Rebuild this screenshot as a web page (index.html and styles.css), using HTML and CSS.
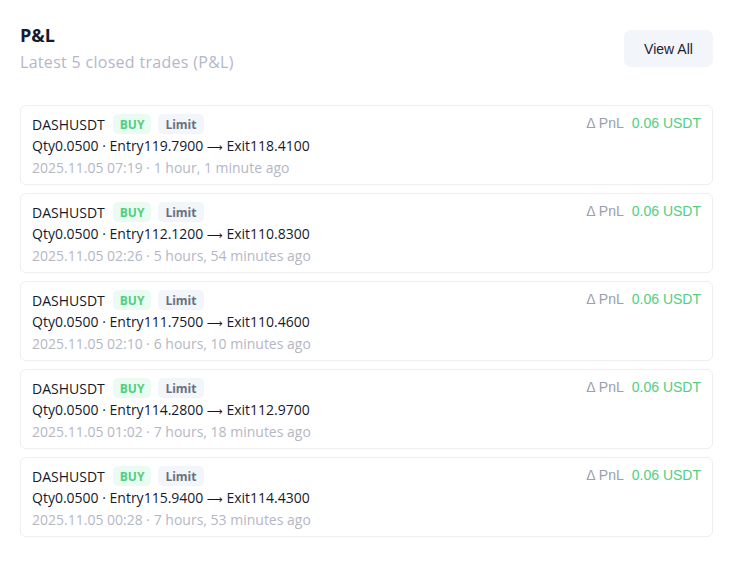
FILE: index.html
```html
<!DOCTYPE html>
<html>
<head>
<meta charset="utf-8">
<link rel="stylesheet" href="styles.css">
</head>
<body>
<div class="panel">
  <div class="header">
    <div>
      <h2 class="title">P&amp;L</h2>
      <div class="subtitle">Latest 5 closed trades (P&amp;L)</div>
    </div>
    <button class="btn">View All</button>
  </div>
  <div class="list">
    <div class="card">
      <div class="left">
        <div class="row1"><span class="sym">DASHUSDT</span><span class="badge buy">BUY</span><span class="badge lim">Limit</span></div>
        <div class="row2">Qty0.0500 · Entry119.7900 <span class="arr">⟶</span> Exit118.4100</div>
        <div class="row3">2025.11.05 07:19 · 1 hour, 1 minute ago</div>
      </div>
      <div class="pnl"><span class="lbl">Δ PnL</span><span class="val">0.06 USDT</span></div>
    </div>
    <div class="card">
      <div class="left">
        <div class="row1"><span class="sym">DASHUSDT</span><span class="badge buy">BUY</span><span class="badge lim">Limit</span></div>
        <div class="row2">Qty0.0500 · Entry112.1200 <span class="arr">⟶</span> Exit110.8300</div>
        <div class="row3">2025.11.05 02:26 · 5 hours, 54 minutes ago</div>
      </div>
      <div class="pnl"><span class="lbl">Δ PnL</span><span class="val">0.06 USDT</span></div>
    </div>
    <div class="card">
      <div class="left">
        <div class="row1"><span class="sym">DASHUSDT</span><span class="badge buy">BUY</span><span class="badge lim">Limit</span></div>
        <div class="row2">Qty0.0500 · Entry111.7500 <span class="arr">⟶</span> Exit110.4600</div>
        <div class="row3">2025.11.05 02:10 · 6 hours, 10 minutes ago</div>
      </div>
      <div class="pnl"><span class="lbl">Δ PnL</span><span class="val">0.06 USDT</span></div>
    </div>
    <div class="card">
      <div class="left">
        <div class="row1"><span class="sym">DASHUSDT</span><span class="badge buy">BUY</span><span class="badge lim">Limit</span></div>
        <div class="row2">Qty0.0500 · Entry114.2800 <span class="arr">⟶</span> Exit112.9700</div>
        <div class="row3">2025.11.05 01:02 · 7 hours, 18 minutes ago</div>
      </div>
      <div class="pnl"><span class="lbl">Δ PnL</span><span class="val">0.06 USDT</span></div>
    </div>
    <div class="card">
      <div class="left">
        <div class="row1"><span class="sym">DASHUSDT</span><span class="badge buy">BUY</span><span class="badge lim">Limit</span></div>
        <div class="row2">Qty0.0500 · Entry115.9400 <span class="arr">⟶</span> Exit114.4300</div>
        <div class="row3">2025.11.05 00:28 · 7 hours, 53 minutes ago</div>
      </div>
      <div class="pnl"><span class="lbl">Δ PnL</span><span class="val">0.06 USDT</span></div>
    </div>
  </div>
</div>
</body>
</html>
```
FILE: styles.css
```css
* { box-sizing: border-box; }
html, body { margin: 0; background: #ffffff; }
body { font-family: "Open Sans", "Liberation Sans", sans-serif; color: #111827; }
.panel { padding: 20px 18px 20px 20px; }
.header { display: flex; justify-content: space-between; align-items: flex-start; margin-bottom: 32px; }
.title { margin: 3px 0 0 0; font-size: 18px; line-height: 24px; font-weight: 700; color: #151a2d; }
.subtitle { margin-top: 4px; font-size: 16px; line-height: 22px; letter-spacing: 0.3px; color: #b4b7c8; }
.btn { margin-top: 10px; width: 89px; height: 37px; border: none; border-radius: 7px; background: #f2f5f9; font-family: "Liberation Sans", Arial, sans-serif; font-size: 14px; font-weight: 500; color: #1c2233; }
.list { display: flex; flex-direction: column; gap: 8px; }
.card { display: flex; justify-content: space-between; align-items: flex-start; border: 1px solid #eceef2; border-radius: 6px; padding: 7px 11px 7px 11px; height: 80px; }
.row1 { display: flex; align-items: center; gap: 7px; height: 22px; font-size: 14px; }
.sym { margin-right: 1px; color: #151a2d; }
.badge { display: inline-flex; align-items: center; height: 20px; padding: 0 7px; border-radius: 5px; font-size: 12px; font-weight: 700; }
.buy { background: #eafcf1; color: #4fcf7f; }
.lim { background: #f2f5f9; color: #6b7080; }
.row2 { height: 22px; font-size: 14px; line-height: 22px; color: #151a2d; }
.arr { font-family: "DejaVu Sans", sans-serif; font-size: 11px; line-height: 0; }
.row3 { font-size: 14px; line-height: 22px; color: #b4b7c5; }
.pnl { display: flex; gap: 8px; margin-top: 0; font-family: "Liberation Sans", Arial, sans-serif; font-size: 14px; line-height: 20px; }
.lbl { color: #9aa0ad; }
.val { color: #4fcf7f; }
```
